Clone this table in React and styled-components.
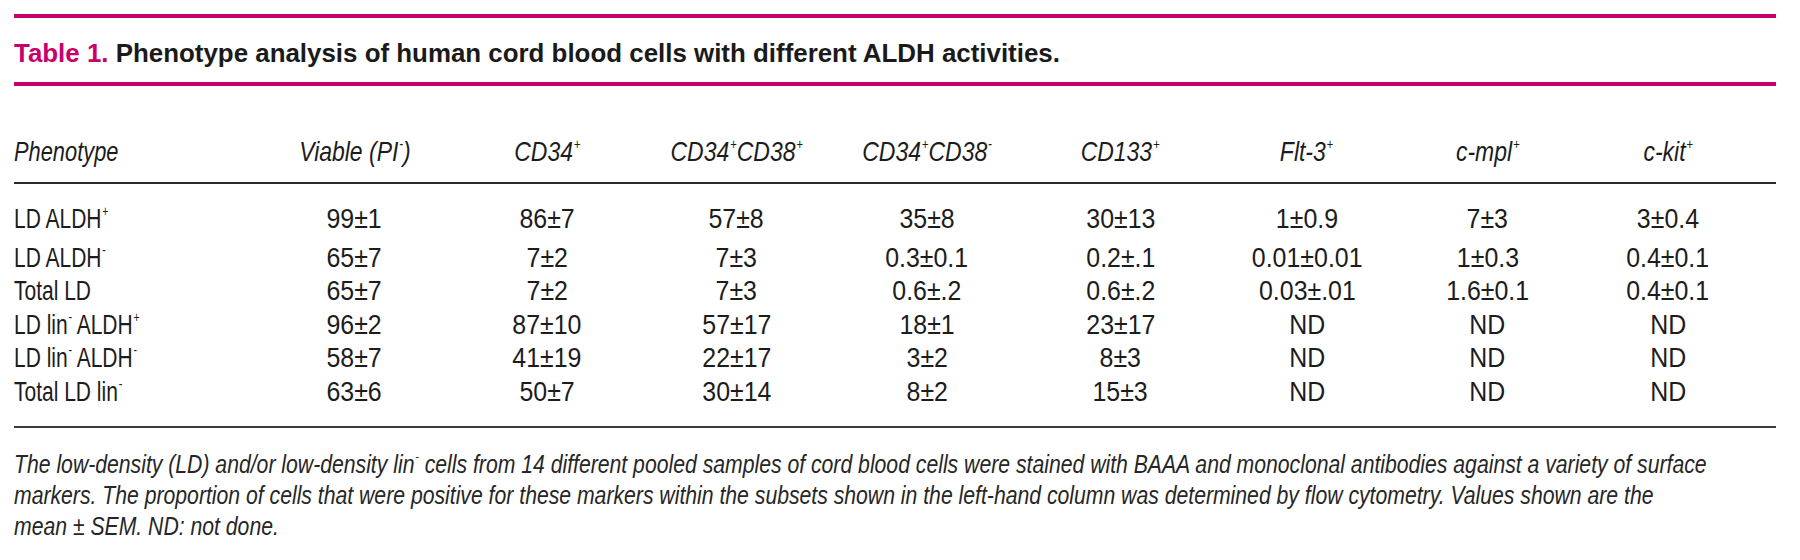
import React from "react";
import styled, { createGlobalStyle } from "styled-components";

const Global = createGlobalStyle`
  html, body { margin: 0; padding: 0; background: #ffffff; }
  body { width: 1800px; height: 560px; overflow: hidden; }
`;

const MAGENTA = "#c8006b";
const INK = "#1c1c1c";
const BODY_FONT = `"Liberation Sans", Arial, sans-serif`;
const COLS = "244px 193px 192px 187px 194px 193px 180px 181px 180px";

const Sheet = styled.div`
  width: 1762px;
  margin-left: 14px;
  padding-top: 14px;
  color: ${INK};
  font-family: ${BODY_FONT};
`;

const Rule = styled.div`
  height: ${(p) => p.$h}px;
  background: ${(p) => p.$color};
`;

const Title = styled.h1`
  margin: 0;
  padding: 20px 0 14px;
  font-family: "Liberation Sans", Arial, sans-serif;
  font-weight: 700;
  font-size: 25.9px;
  line-height: 30px;
  color: #1a1a1a;
`;

const TitleLabel = styled.span`
  color: ${MAGENTA};
`;

const Head = styled.div`
  padding: 48.5px 18px 14px 0;
`;

const Body = styled.div`
  padding: 17.5px 18px 17.5px 0;
`;

const Row = styled.div`
  display: grid;
  grid-template-columns: ${COLS};
  font-size: 28px;
  line-height: 33.5px;
  padding-bottom: ${(p) => (p.$extra ? "5.5px" : "0")};
  font-style: ${(p) => (p.$head ? "italic" : "normal")};
`;

const Cell = styled.div`
  text-align: ${(p) => (p.$left ? "left" : "center")};
  white-space: nowrap;
`;

/* the printed table uses a condensed face; narrow the installed sans to match */
const Squeeze = styled.span`
  display: inline-block;
  transform: scaleX(${(p) => p.$sx});
  transform-origin: ${(p) => (p.$left ? "left center" : "center center")};
`;

const Sup = styled.sup`
  font-size: 0.5em;
  line-height: 0;
  vertical-align: 0.85em;
  margin-left: 1px;
`;

const Caption = styled.div`
  padding-top: 21px;
  font-style: italic;
  font-size: 26px;
  line-height: 31px;
  color: #262626;
`;

const CaptionLine = styled.div`
  width: max-content;
  white-space: nowrap;
  transform: scaleX(0.815);
  transform-origin: left center;
`;

const P = () => <Sup>+</Sup>;
const M = () => <Sup>-</Sup>;

const header = [
  <>Phenotype</>,
  <>Viable (PI<M />)</>,
  <>CD34<P /></>,
  <>CD34<P />CD38<P /></>,
  <>CD34<P />CD38<M /></>,
  <>CD133<P /></>,
  <>Flt-3<P /></>,
  <>c-mpl<P /></>,
  <>c-kit<P /></>,
];

const rows = [
  [<>LD ALDH<P /></>, "99±1", "86±7", "57±8", "35±8", "30±13", "1±0.9", "7±3", "3±0.4"],
  [<>LD ALDH<M /></>, "65±7", "7±2", "7±3", "0.3±0.1", "0.2±.1", "0.01±0.01", "1±0.3", "0.4±0.1"],
  [<>Total LD</>, "65±7", "7±2", "7±3", "0.6±.2", "0.6±.2", "0.03±.01", "1.6±0.1", "0.4±0.1"],
  [<>LD lin<M /> ALDH<P /></>, "96±2", "87±10", "57±17", "18±1", "23±17", "ND", "ND", "ND"],
  [<>LD lin<M /> ALDH<M /></>, "58±7", "41±19", "22±17", "3±2", "8±3", "ND", "ND", "ND"],
  [<>Total LD lin<M /></>, "63±6", "50±7", "30±14", "8±2", "15±3", "ND", "ND", "ND"],
];

export default function App() {
  return (
    <>
      <Global />
      <Sheet>
        <Rule $h={4} $color={MAGENTA} />
        <Title>
          <TitleLabel>Table 1.</TitleLabel> Phenotype analysis of human cord blood cells with different ALDH activities.
        </Title>
        <Rule $h={4} $color={MAGENTA} />
        <Head>
          <Row $head>
            {header.map((h, i) => (
              <Cell key={i} $left={i === 0}>
                <Squeeze $sx={i === 0 ? 0.78 : 0.82} $left={i === 0}>{h}</Squeeze>
              </Cell>
            ))}
          </Row>
        </Head>
        <Rule $h={2} $color="#2b2b2b" />
        <Body>
          {rows.map((r, ri) => (
            <Row key={ri} $extra={ri === 0}>
              {r.map((c, ci) => (
                <Cell key={ci} $left={ci === 0}>
                  <Squeeze $sx={ci === 0 ? 0.75 : 0.89} $left={ci === 0}>{c}</Squeeze>
                </Cell>
              ))}
            </Row>
          ))}
        </Body>
        <Rule $h={2} $color="#3a3a3a" />
        <Caption>
          <CaptionLine>
            The low-density (LD) and/or low-density lin<M /> cells from 14 different pooled samples of cord blood cells were stained with BAAA and monoclonal antibodies against a variety of surface
          </CaptionLine>
          <CaptionLine>
            markers. The proportion of cells that were positive for these markers within the subsets shown in the left-hand column was determined by flow cytometry. Values shown are the
          </CaptionLine>
          <CaptionLine>mean ± SEM. ND: not done.</CaptionLine>
        </Caption>
      </Sheet>
    </>
  );
}
